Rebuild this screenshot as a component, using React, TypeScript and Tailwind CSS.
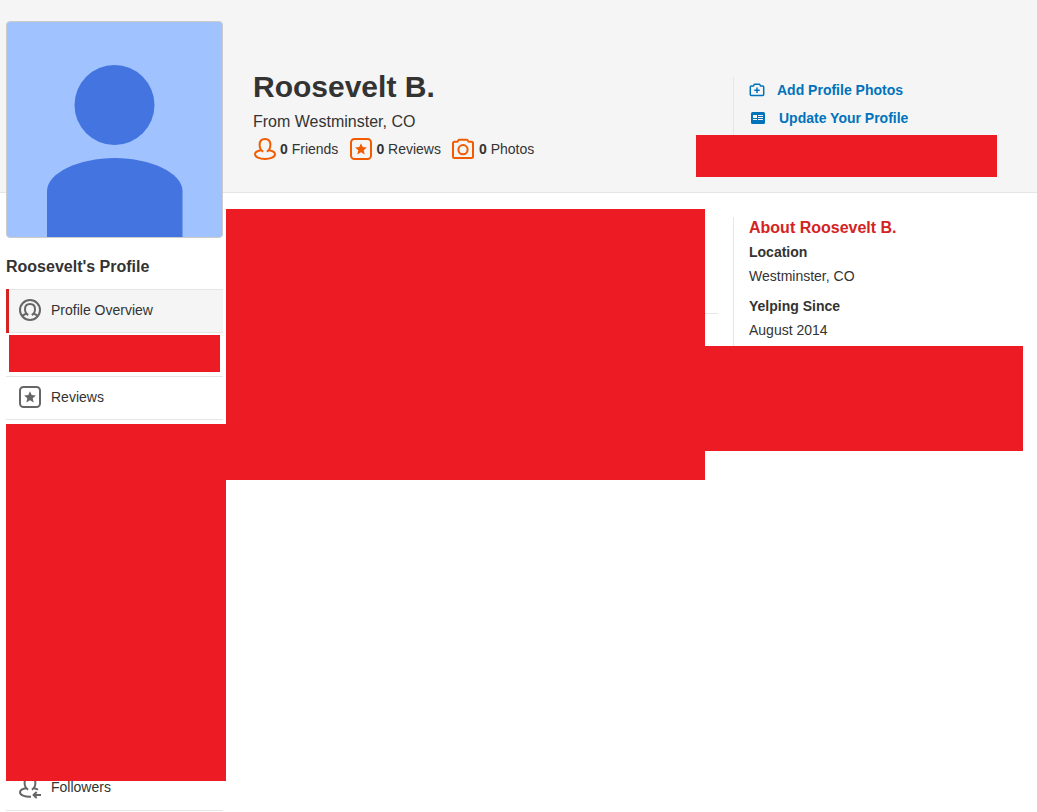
import React from "react";

type IconProps = { className?: string };

function FriendIcon({ className }: IconProps) {
  return (
    <svg viewBox="0 0 24 24" className={className} fill="none" stroke="currentColor" strokeWidth="2" strokeLinejoin="round" aria-hidden="true">
      <path d="M8 13.200C4.400 13.800 2 15.400 2 17.300 2 20 6.500 22 12 22s10-2 10-4.700c0-1.900-2.400-3.500-6-4.100" />
      <path d="M10.200 14.600C8 13.600 6.600 10.800 6.600 7.800 6.600 4.300 8.700 2 12 2s5.400 2.300 5.400 5.800c0 3-1.400 5.800-3.600 6.800" />
    </svg>
  );
}

function ReviewIcon({ className }: IconProps) {
  return (
    <svg viewBox="0 0 24 24" className={className} aria-hidden="true">
      <rect x="2" y="2" width="20" height="20" rx="3.500" fill="none" stroke="currentColor" strokeWidth="2" />
      <path fill="currentColor" d="M12 6.200l1.700 3.900 4.200.4-3.200 2.800 1 4.200-3.700-2.200-3.700 2.200 1-4.200-3.200-2.800 4.200-.4z" />
    </svg>
  );
}

function CameraIcon({ className }: IconProps) {
  return (
    <svg viewBox="0 0 24 24" className={className} fill="none" stroke="currentColor" strokeWidth="2" strokeLinejoin="round" aria-hidden="true">
      <path d="M2.500 4.700H5.300C6.200 4.700 6 2.700 7 2.700h8c1 0 .8 2 1.700 2h2.800A1.500 1.500 0 0 1 21 6.200v13.300a1.500 1.500 0 0 1-1.500 1.500h-17A1.500 1.500 0 0 1 1 19.500V6.200A1.500 1.500 0 0 1 2.500 4.700z" />
      <circle cx="11" cy="12.700" r="4.600" />
    </svg>
  );
}

function AddPhotoIcon({ className }: IconProps) {
  return (
    <svg viewBox="0 0 18 18" className={className} fill="none" stroke="currentColor" strokeWidth="1.500" strokeLinejoin="round" aria-hidden="true">
      <path d="M3.200 5h2.300l.8-1.700h5.400l.8 1.700h2.300c.5 0 .9.400.9.900v7.700c0 .5-.4.900-.9.900H3.200c-.5 0-.9-.4-.9-.9V5.900c0-.5.4-.9.900-.9z" />
      <path d="M9 6.600v5.400M6.300 9.300h5.400" />
    </svg>
  );
}

function CardIcon({ className }: IconProps) {
  return (
    <svg viewBox="0 0 18 18" className={className} aria-hidden="true">
      <rect x="2" y="3" width="14" height="12" rx="1.500" fill="currentColor" />
      <path d="M4 6h4v3H4zM4 10h4v1H4zM9 6h5v1H9zM9 8h5v1H9zM9 10h5v1H9z" fill="#f5f5f5" />
    </svg>
  );
}

function ProfileIcon({ className }: IconProps) {
  return (
    <svg viewBox="0 0 24 24" className={className} fill="none" stroke="currentColor" strokeWidth="2" strokeLinejoin="round" aria-hidden="true">
      <circle cx="12" cy="12" r="10" />
      <path d="M10.300 17C8.200 16 7 13.700 7 11.200 7 8.100 9 6 12 6s5 2.100 5 5.200c0 2.500-1.200 4.800-3.300 5.800" />
      <path d="M4.500 18.300c.8-1.500 2.200-2.300 4-2.600M19.500 18.300c-.8-1.500-2.200-2.300-4-2.600" />
    </svg>
  );
}

function FollowerIcon({ className }: IconProps) {
  return (
    <svg viewBox="0 0 24 24" className={className} fill="none" stroke="currentColor" strokeWidth="2" strokeLinejoin="round" aria-hidden="true">
      <path d="M8 13.200C4.400 13.800 2 15.400 2 17.300 2 20 6.500 22 13 21.700M16 13.200c1.600.3 3 .8 4 1.500" />
      <path d="M10.200 14.600C8 13.600 6.600 10.800 6.600 7.800 6.600 4.300 8.700 2 12 2s5.400 2.300 5.400 5.800c0 3-1.400 5.800-3.600 6.800" />
      <path d="M23 20h-7M18.700 17l-3.200 3 3.200 3" />
    </svg>
  );
}

function Avatar() {
  return (
    <div className="aspect-square w-full overflow-hidden rounded-[4px] border border-[#ccc] bg-[#a0c2ff]">
      <svg viewBox="0 0 215 215" className="block w-full" role="img" aria-label="Roosevelt B.">
        <circle cx="107.500" cy="83" r="40" fill="#4374e0" />
        <path d="M40 215v-46c0-18 32-33 67.700-33s67.800 15 67.800 33v46z" fill="#4374e0" />
      </svg>
    </div>
  );
}

function Stat({ icon, label }: { icon: React.ReactNode; label: string }) {
  return (
    <li className="flex items-center gap-[3px]">
      {icon}
      <span>
        <b>0</b> {label}
      </span>
    </li>
  );
}

function NavLink({ icon, label, active = false }: { icon: React.ReactNode; label: string; active?: boolean }) {
  return (
    <a href="#" className={active ? "flex items-center gap-[9px] pt-2 pl-[9px]" : "flex items-center gap-[9px] pt-2 pl-3"}>
      <span className="text-[#666]">{icon}</span>
      {label}
    </a>
  );
}

export default function App() {
  return (
    <div className="bg-white font-['Liberation_Sans',Arial,sans-serif] text-[14px] leading-[18px] text-[#333]">
      <header className="flex h-[193px] border-b border-[#e6e6e6] bg-[#f5f5f5] pl-[253px]">
        <div className="min-w-0 flex-1 pt-[67px]">
          <h1 className="text-[30px] leading-[40px] font-bold">Roosevelt B.</h1>
          <p className="mt-1 text-[16px] leading-[22px]">From Westminster, CO</p>
          <ul className="mt-1 flex items-center gap-[11px]">
            <Stat icon={<FriendIcon className="size-6 text-[#f15c00]" />} label="Friends" />
            <Stat icon={<ReviewIcon className="size-6 text-[#f15c00]" />} label="Reviews" />
            <Stat icon={<CameraIcon className="size-6 text-[#f15c00]" />} label="Photos" />
          </ul>
        </div>
        <div className="w-[304px] shrink-0 pt-[77px]">
          <ul className="flex h-[58px] flex-col gap-[10px] border-l border-[#e6e6e6] pt-1 pl-[14px] font-bold text-[#0073bb]">
            <li>
              <a href="#" className="flex items-center gap-[11px]">
                <AddPhotoIcon className="size-[18px]" />
                Add Profile Photos
              </a>
            </li>
            <li>
              <a href="#" className="flex items-center gap-3 pl-px">
                <CardIcon className="size-[18px]" />
                Update Your Profile
              </a>
            </li>
          </ul>
          <div className="mr-10 -ml-[37px] h-[42px] bg-[#ed1c24]" />
        </div>
      </header>

      <div className="flex items-start pl-[6px]">
        <aside className="-mt-[172px] w-[217px] shrink-0">
          <Avatar />
          <h2 className="mt-[19px] text-[16px] leading-[20px] font-bold">Roosevelt&apos;s Profile</h2>
          <nav className="mt-3">
            <ul>
              <li className="flex h-11 border-l-[3px] border-[#d32323]">
                <div className="flex-1 border-y border-[#e6e6e6] bg-[#f5f5f5]">
                  <NavLink active icon={<ProfileIcon className="size-6" />} label="Profile Overview" />
                </div>
              </li>
              <li className="h-11 border-b border-[#e6e6e6] px-[3px] pt-[2px]">
                <div className="h-[37px] bg-[#ed1c24]" />
              </li>
              <li className="h-[43px] border-b border-[#e6e6e6]">
                <NavLink icon={<ReviewIcon className="size-6" />} label="Reviews" />
              </li>
              <li className="relative z-10 mt-1 -mr-[3px] h-[357px] bg-[#ed1c24]" />
              <li className="-mt-[14px] h-11 border-b border-[#e6e6e6]">
                <NavLink icon={<FollowerIcon className="size-6" />} label="Followers" />
              </li>
            </ul>
          </nav>
        </aside>

        <main className="mt-4 ml-[3px] flex min-w-0 flex-1">
          <div className="h-[271px] flex-1 bg-[#ed1c24]" />
          <div className="mt-[104px] mr-[15px] w-[13px] border-t border-[#e6e6e6]" />
        </main>

        <aside className="mt-6 w-[304px] shrink-0">
          <div className="h-[129px] border-l border-[#e6e6e6] pt-px pl-[15px]">
            <h3 className="text-[16px] leading-[20px] font-bold text-[#d32323]">About Roosevelt B.</h3>
            <dl>
              <dt className="mt-[5px] font-bold">Location</dt>
              <dd className="mt-[6px]">Westminster, CO</dd>
              <dt className="mt-3 font-bold">Yelping Since</dt>
              <dd className="mt-[6px]">August 2014</dd>
            </dl>
          </div>
          <div className="mr-[14px] -ml-7 h-[105px] bg-[#ed1c24]" />
        </aside>
      </div>
    </div>
  );
}
